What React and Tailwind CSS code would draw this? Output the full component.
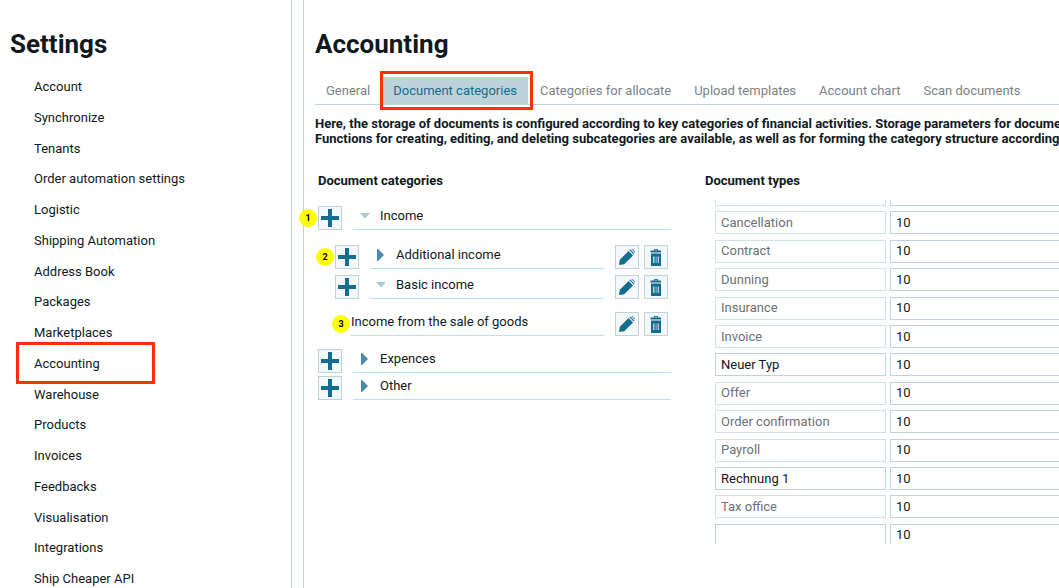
import React, { useState } from 'react'

const menu = [
  'Account', 'Synchronize', 'Tenants', 'Order automation settings', 'Logistic',
  'Shipping Automation', 'Address Book', 'Packages', 'Marketplaces', 'Accounting',
  'Warehouse', 'Products', 'Invoices', 'Feedbacks', 'Visualisation', 'Integrations',
  'Ship Cheaper API',
]

const tabs = [
  'General', 'Document categories', 'Categories for allocate', 'Upload templates',
  'Account chart', 'Scan documents',
]

const types = [
  { name: '', locked: true },
  { name: 'Cancellation', locked: true },
  { name: 'Contract', locked: true },
  { name: 'Dunning', locked: true },
  { name: 'Insurance', locked: true },
  { name: 'Invoice', locked: true },
  { name: 'Neuer Typ' },
  { name: 'Offer', locked: true },
  { name: 'Order confirmation', locked: true },
  { name: 'Payroll', locked: true },
  { name: 'Rechnung 1' },
  { name: 'Tax office', locked: true },
  { name: '' },
]

function PlusIcon() {
  return (
    <svg width="18" height="18" viewBox="0 0 18 18" fill="#146c8f">
      <path d="M7 0h4v7h7v4h-7v7H7v-7H0V7h7z" />
    </svg>
  )
}

function PencilIcon() {
  return (
    <svg width="16" height="16" viewBox="0 0 16 16" fill="#146c8f">
      <path d="M0 16l.8-5.200L9.600 2l4.400 4.400L5.200 15.200z" />
      <path d="M10.500 1.300L11.300.5l4.200 4.200-.8.8z" />
      <path d="M12.300 0h.9L16 2.800v.9z" />
    </svg>
  )
}

function TrashIcon() {
  return (
    <svg width="12" height="18" viewBox="0 0 12 18" fill="#146c8f">
      <path d="M4 1h4v1.500h3V4.500H.500V2.500H4zM5 1.800v.7h2v-.7z" fillRule="evenodd" />
      <path d="M1 5.500h10V18H1z" />
      <path d="M3 8.500h1.500V15H3zM5.700 8.500h.8V15h-.8zM7.700 8.500h1.300V15H7.700z" fill="#b5d0dc" />
    </svg>
  )
}

function IconButton({ label, children }) {
  return (
    <button
      aria-label={label}
      className="w-6 h-6 shrink-0 flex items-center justify-center border border-[#bcd3da] bg-[#f4f8f9]"
    >
      {children}
    </button>
  )
}

function Arrow({ open }) {
  return open ? (
    <svg width="10" height="12" viewBox="0 0 10 12" fill="#a9c8d6"><path d="M0 3h10L5 8.500z" /></svg>
  ) : (
    <svg width="10" height="12" viewBox="0 0 10 12" fill="#4a89a8"><path d="M1 0h1l6 6-6 6H1z" /></svg>
  )
}

function Badge({ children }) {
  return (
    <span className="absolute right-full top-0 mt-[3px] mr-px w-[18px] h-[18px] rounded-full bg-[#fbff00] flex items-center justify-center text-[9px] font-bold text-black">
      {children}
    </span>
  )
}

function RootRow({ name, open, badge }) {
  return (
    <div className="relative flex h-6 gap-[11px]">
      {badge && <Badge>{badge}</Badge>}
      <IconButton label={`Add to ${name}`}><PlusIcon /></IconButton>
      <div className="flex-1 flex items-center gap-[10px] pl-[7px] pb-1 border-b border-[#b3e3f8]">
        <Arrow open={open} />
        {name}
      </div>
    </div>
  )
}

function SubRow({ name, open, badge, leaf }) {
  return (
    <div className="relative flex h-6 ml-[17px] mr-[3px]">
      {badge && !leaf && <Badge>{badge}</Badge>}
      {!leaf && <IconButton label={`Add to ${name}`}><PlusIcon /></IconButton>}
      {leaf ? (
        <div className="relative ml-4 flex-1 flex items-center pb-1 border-b border-[#b3e3f8]">
          <Badge>{badge}</Badge>
          {name}
        </div>
      ) : (
        <div className="ml-[11px] flex-1 flex items-center gap-[10px] pl-[6px] pb-1 border-b border-[#b3e3f8]">
          <Arrow open={open} />
          {name}
        </div>
      )}
      <div className="flex gap-[5px] ml-[11px]">
        <IconButton label={`Edit ${name}`}><PencilIcon /></IconButton>
        <IconButton label={`Delete ${name}`}><TrashIcon /></IconButton>
      </div>
    </div>
  )
}

export default function App() {
  const [active, setActive] = useState('Document categories')

  return (
    <div className="h-screen flex gap-[11px] overflow-hidden bg-white font-['Roboto',sans-serif] text-[13px] leading-4 text-[#10191e]">

      {/* Settings menu */}
      <aside className="w-[292px] shrink-0 flex flex-col border-r border-[#bcd3da] pt-7 pb-px">
        <h1 className="pl-[10px] text-[26px] leading-8 font-bold">Settings</h1>
        <nav className="flex-1 flex flex-col justify-between items-start pl-[34px] pt-[19px]">
          {menu.map((item) => (
            <a key={item} href="#" className="relative">
              {item}
              {item === 'Accounting' && (
                <span className="absolute -left-[18px] -top-[14px] w-[139px] h-[42px] border-3 border-[#fb3207]" />
              )}
            </a>
          ))}
        </nav>
      </aside>

      <main className="flex-1 min-w-0 border-l border-[#bcd3da] pl-[11px] pt-7">
        <h1 className="text-[26px] leading-8 font-bold">Accounting</h1>

        {/* Tabs */}
        <div className="flex gap-px mt-[17px] border-b border-[#bcd3da]">
          {tabs.map((tab) => (
            <button
              key={tab}
              onClick={() => setActive(tab)}
              className={`relative h-[27px] px-[11px] whitespace-nowrap ${tab === active ? 'bg-[#bcd3da] text-[#146c8f]' : 'text-[#7b8285]'}`}
            >
              {tab}
              {tab === active && (
                <span className="absolute -left-[2px] -right-[5px] -top-[6px] -bottom-[6px] border-3 border-[#fb3207]" />
              )}
            </button>
          ))}
        </div>

        <p className="mt-[11px] overflow-hidden whitespace-nowrap leading-[15px] font-bold">
          Here, the storage of documents is configured according to key categories of financial activities. Storage parameters for documents
          <br />
          Functions for creating, editing, and deleting subcategories are available, as well as for forming the category structure according
        </p>

        <div className="flex mt-[27px]">
          {/* Category tree */}
          <section className="w-[356px] shrink-0 pl-[3px]">
            <h2 className="font-bold">Document categories</h2>
            <div className="mt-[17px]">
              <RootRow name="Income" open badge="1" />
              <div className="mt-[15px] mb-[13px]">
                <SubRow name="Additional income" badge="2" />
                <div className="mt-[6px] mb-[13px]">
                  <SubRow name="Basic income" open />
                </div>
                <SubRow name="Income from the sale of goods" badge="3" leaf />
              </div>
              <div className="space-y-[3px]">
                <RootRow name="Expences" />
                <RootRow name="Other" />
              </div>
            </div>
          </section>

          {/* Document types */}
          <section className="ml-[34px] flex-1 min-w-0">
            <h2 className="font-bold">Document types</h2>
            <div className="mt-[11px] ml-[10px] h-[344px] overflow-hidden">
              <div className="-mt-[17px] h-[364px] flex flex-col justify-between">
                {types.map(({ name, locked }, i) => (
                  <div key={i} className="flex gap-1 h-[23px]">
                    <input
                      aria-label="Document type"
                      defaultValue={name}
                      disabled={locked}
                      className="w-[171px] px-[5px] border border-[#bcd3da] disabled:border-[#d0e0e5] disabled:text-[#6b7174]"
                    />
                    <input
                      aria-label="Storage period"
                      defaultValue="10"
                      className="flex-1 min-w-0 px-[5px] border border-r-0 border-[#bcd3da]"
                    />
                  </div>
                ))}
              </div>
            </div>
          </section>
        </div>
      </main>
    </div>
  )
}
